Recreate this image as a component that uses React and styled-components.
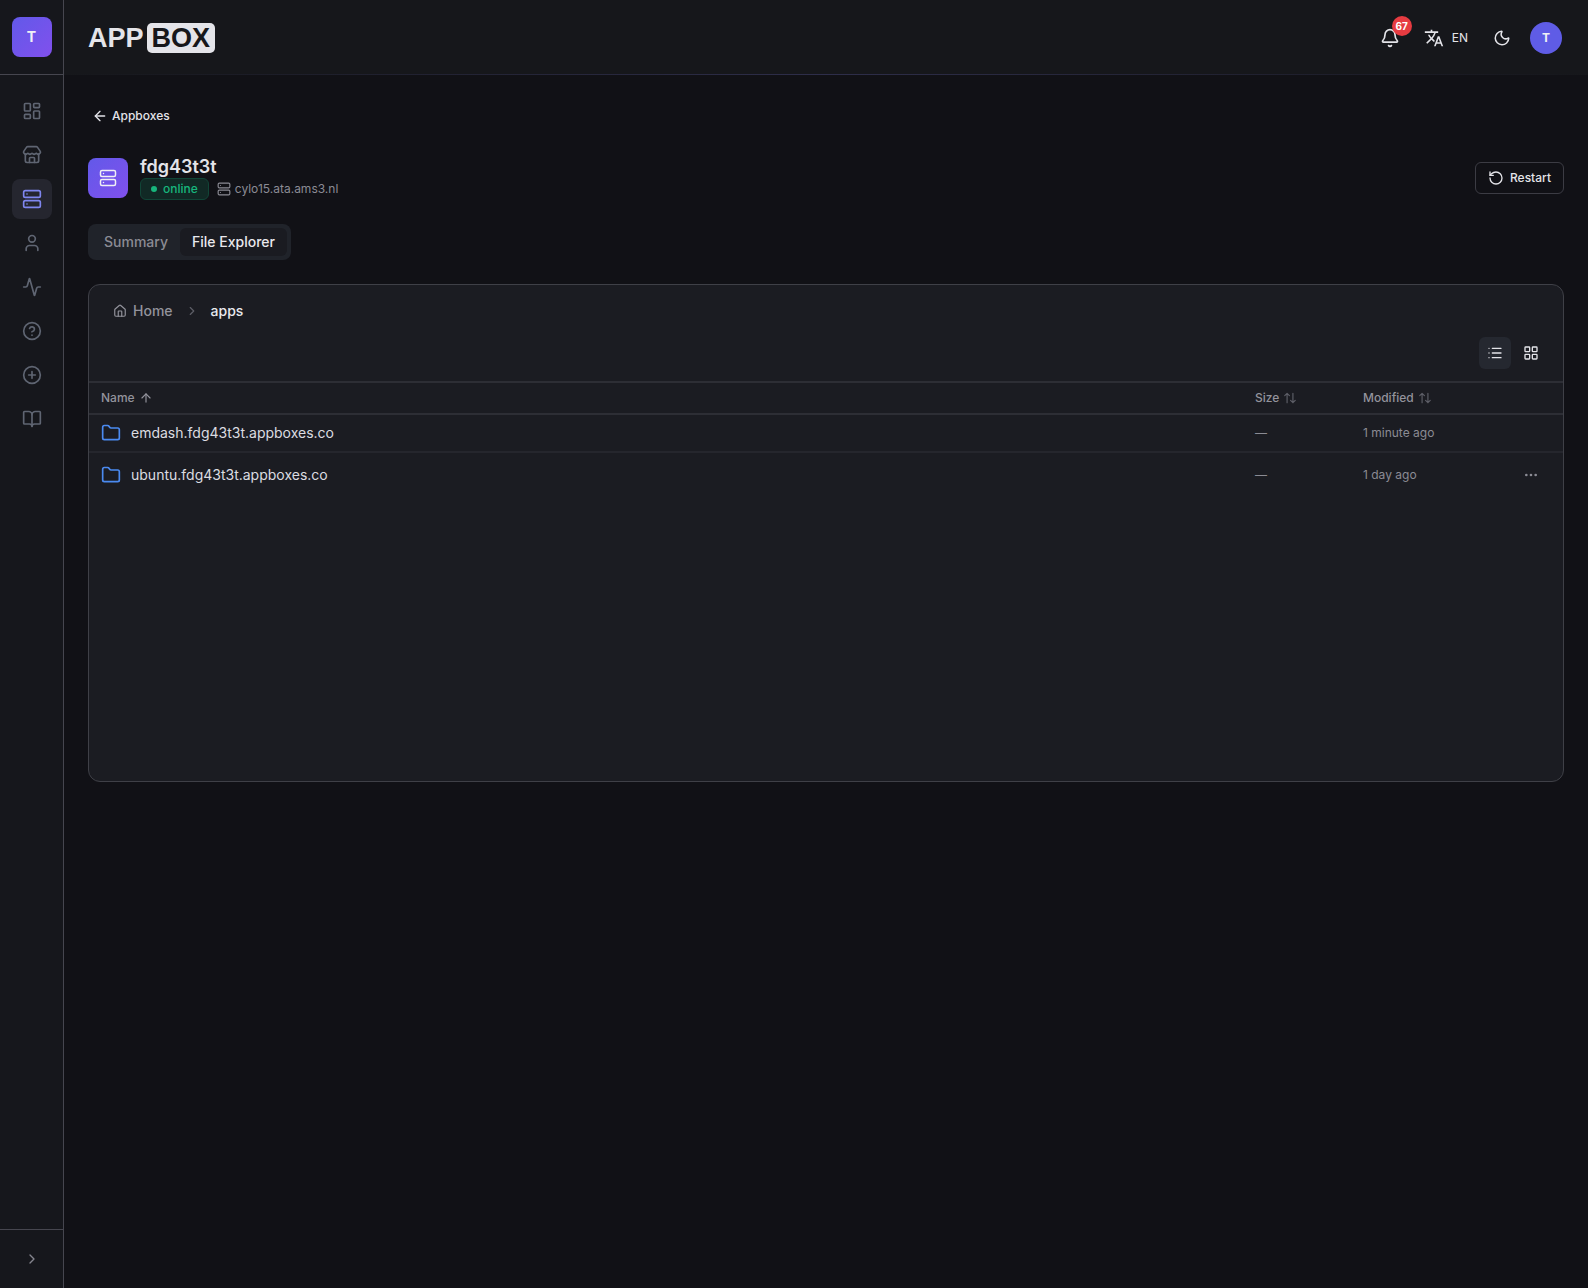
import React, { useState } from 'react'
import styled, { createGlobalStyle } from 'styled-components'
import {
  Activity,
  ArrowLeft,
  ArrowUp,
  Bell,
  BookOpen,
  ChevronRight,
  CircleHelp,
  CirclePlus,
  Ellipsis,
  Folder,
  House,
  LayoutDashboard,
  LayoutGrid,
  List,
  Moon,
  RotateCcw,
  Server,
  Store,
  User
} from 'lucide-react'
import { MdTranslate } from 'react-icons/md'

const GlobalStyle = createGlobalStyle`
  * {
    box-sizing: border-box;
  }

  body {
    margin: 0;
    background: #111116;
    color: #e4e4e9;
    font-family: Inter, 'Liberation Sans', sans-serif;
    font-size: 14px;
    line-height: 20px;
  }

  button {
    margin: 0;
    padding: 0;
    border: 0;
    background: none;
    color: inherit;
    font: inherit;
    cursor: pointer;
  }

  a {
    color: inherit;
    text-decoration: none;
  }

  svg {
    display: block;
    flex-shrink: 0;
  }
`

const Layout = styled.div`
  display: grid;
  grid-template-columns: 64px minmax(0, 1fr);
  min-height: 100vh;
`

const Sidebar = styled.aside`
  display: flex;
  flex-direction: column;
  background: #16171c;
  border-right: 1px solid #46464f;
`

const SidebarTop = styled.div`
  display: flex;
  align-items: center;
  justify-content: center;
  height: 75px;
  border-bottom: 1px solid #46464f;
`

const Tile = styled.div`
  display: flex;
  flex-shrink: 0;
  align-items: center;
  justify-content: center;
  width: 40px;
  height: 40px;
  border-radius: 8px;
  background: linear-gradient(135deg, #6259e9, #8150ed);
  color: #f0f0f5;
  font-weight: 700;
`

const Nav = styled.nav`
  display: flex;
  flex: 1;
  flex-direction: column;
  align-items: center;
  gap: 4px;
  padding: 16px 0;
`

const NavLink = styled.a`
  display: flex;
  align-items: center;
  justify-content: center;
  width: 40px;
  height: 40px;
  border-radius: 8px;
  background: ${({ $active }) => ($active ? '#25262f' : 'transparent')};
  color: ${({ $active }) => ($active ? '#7f86ee' : '#5f6572')};
`

const ExpandButton = styled.button`
  display: flex;
  align-items: center;
  justify-content: center;
  height: 59px;
  border-top: 1px solid #46464f;
  color: #85858e;
`

const Page = styled.div`
  display: flex;
  flex-direction: column;
`

const Header = styled.header`
  display: flex;
  align-items: center;
  justify-content: space-between;
  height: 75px;
  padding: 0 26px 0 24px;
  background:
    linear-gradient(90deg, #16171b, #2e2e4a, #16171b) bottom / 100% 1px no-repeat,
    #16171b;
`

const Logo = styled.a`
  display: flex;
  align-items: center;
  gap: 3px;
  color: #e4e4e9;
  font-family: 'Liberation Sans', Arial, sans-serif;
  font-size: 27px;
  font-weight: 700;
  line-height: 30px;
`

const LogoBox = styled.span`
  padding: 0 5px;
  border-radius: 5px;
  background: #e4e4e9;
  color: #16171b;
`

const HeaderActions = styled.div`
  display: flex;
  align-items: center;
  gap: 4px;
`

const HeaderButton = styled.button`
  position: relative;
  display: flex;
  align-items: center;
  justify-content: center;
  gap: 8px;
  min-width: 40px;
  height: 40px;
  padding: 0 10px;
  font-size: 12px;
`

const Count = styled.span`
  position: absolute;
  top: -2px;
  right: -2px;
  width: 20px;
  height: 20px;
  border-radius: 50%;
  background: #e63b41;
  color: #fff;
  font-size: 10px;
  font-weight: 700;
  line-height: 20px;
`

const Avatar = styled.button`
  width: 32px;
  height: 32px;
  margin-left: 4px;
  border-radius: 50%;
  background: #5f5ce6;
  color: #f0f0f5;
  font-size: 12px;
  font-weight: 700;
`

const Main = styled.main`
  padding: 25px 24px;
`

const BackLink = styled.a`
  display: inline-flex;
  align-items: center;
  gap: 4px;
  height: 32px;
  padding: 0 4px;
  font-size: 12px;
  font-weight: 500;
`

const TitleBar = styled.div`
  display: flex;
  align-items: center;
  gap: 12px;
  margin-top: 24px;
`

const TitleText = styled.div`
  flex: 1;
`

const Title = styled.h1`
  margin: 0;
  font-size: 18px;
  font-weight: 600;
  line-height: 22px;
`

const Meta = styled.div`
  display: flex;
  align-items: center;
  gap: 8px;
  color: #8b8b94;
  font-size: 12px;
`

const Status = styled.span`
  display: flex;
  align-items: center;
  gap: 6px;
  height: 22px;
  padding: 0 10px;
  border: 1px solid #114537;
  border-radius: 6px;
  background: #112925;
  color: #17b67c;
  font-weight: 500;
`

const Dot = styled.span`
  width: 6px;
  height: 6px;
  border-radius: 50%;
  background: #17b67c;
`

const Host = styled.span`
  display: flex;
  align-items: center;
  gap: 4px;
`

const RestartButton = styled.button`
  display: flex;
  align-items: center;
  gap: 6px;
  height: 32px;
  padding: 0 12px;
  border: 1px solid #3c3c44;
  border-radius: 6px;
  font-size: 12px;
  font-weight: 500;
`

const Tabs = styled.div`
  display: inline-flex;
  margin-top: 24px;
  padding: 4px;
  border-radius: 8px;
  background: #20232a;
`

const Tab = styled.button`
  height: 28px;
  padding: 0 12px;
  border-radius: 6px;
  background: ${({ $active }) => ($active ? '#1a1b21' : 'transparent')};
  color: ${({ $active }) => ($active ? '#e9e9ee' : '#8b8b94')};
  font-weight: 500;
`

const Card = styled.section`
  margin-top: 24px;
  border: 1px solid #3f4047;
  border-radius: 12px;
  background: #1b1c22;
`

const Breadcrumbs = styled.nav`
  display: flex;
  align-items: center;
  gap: 12px;
  padding: 16px 24px 0;
  color: #93939c;
  font-weight: 500;
`

const Crumb = styled.a`
  display: flex;
  align-items: center;
  gap: 6px;
  color: ${({ $current }) => ($current ? '#e9e9ee' : 'inherit')};
`

const Toolbar = styled.div`
  display: flex;
  justify-content: flex-end;
  gap: 4px;
  padding: 16px 16px 12px;
  border-bottom: 2px solid #2d2e35;
`

const ViewButton = styled.button`
  display: flex;
  align-items: center;
  justify-content: center;
  width: 32px;
  height: 32px;
  border-radius: 6px;
  background: ${({ $active }) => ($active ? '#252830' : 'transparent')};
`

const TableArea = styled.div`
  min-height: 398px;
`

const Table = styled.table`
  width: 100%;
  border-spacing: 0;
  table-layout: fixed;
`

const Th = styled.th`
  width: ${({ $width }) => $width || 'auto'};
  height: 32px;
  padding: 0 12px;
  border-bottom: 2px solid #2d2e35;
  color: #93939c;
  font-size: 12px;
  text-align: left;
`

const SortButton = styled.button`
  display: flex;
  align-items: center;
  gap: 4px;
  font-weight: 500;
`

const Td = styled.td`
  height: 38px;
  padding: 0 12px;
  border-bottom: 2px solid #25262d;
  color: #8b8b94;
  font-size: 12px;

  tr:last-child > & {
    height: 44px;
    border-bottom: 0;
  }
`

const FileLink = styled.a`
  display: flex;
  align-items: center;
  gap: 10px;
  color: #dcdce1;
  font-size: 14px;
`

const MenuButton = styled.button`
  display: flex;
  align-items: center;
  justify-content: center;
  width: 32px;
  height: 32px;
  margin: 0 4px 0 auto;
`

const navItems = [
  { label: 'Dashboard', icon: LayoutDashboard },
  { label: 'App Store', icon: Store },
  { label: 'Appboxes', icon: Server },
  { label: 'Account', icon: User },
  { label: 'Activity', icon: Activity },
  { label: 'Help', icon: CircleHelp },
  { label: 'New Appbox', icon: CirclePlus },
  { label: 'Docs', icon: BookOpen }
]

const files = [
  { name: 'emdash.fdg43t3t.appboxes.co', modified: '1 minute ago', hasMenu: false },
  { name: 'ubuntu.fdg43t3t.appboxes.co', modified: '1 day ago', hasMenu: true }
]

const SortIcon = () => (
  <svg width="14" height="14" viewBox="0 0 24 24" fill="none" stroke="#5d5e67" strokeWidth="2" strokeLinecap="round" strokeLinejoin="round">
    <path d="M3 8l4-4 4 4M7 4v16M21 16l-4 4-4-4M17 4v16" />
  </svg>
)

const FileTable = () => (
  <Table>
    <thead>
      <tr>
        <Th>
          <SortButton>
            Name <ArrowUp size={14} />
          </SortButton>
        </Th>
        <Th $width="108px">
          <SortButton>
            Size <SortIcon />
          </SortButton>
        </Th>
        <Th $width="144px">
          <SortButton>
            Modified <SortIcon />
          </SortButton>
        </Th>
        <Th as="td" $width="68px" />
      </tr>
    </thead>
    <tbody>
      {files.map((file) => (
        <tr key={file.name}>
          <Td>
            <FileLink href="#">
              <Folder size={20} color="#4b8af0" />
              {file.name}
            </FileLink>
          </Td>
          <Td>—</Td>
          <Td>{file.modified}</Td>
          <Td>
            {file.hasMenu && (
              <MenuButton aria-label={`Actions for ${file.name}`}>
                <Ellipsis size={16} />
              </MenuButton>
            )}
          </Td>
        </tr>
      ))}
    </tbody>
  </Table>
)

const App = () => {
  const [tab, setTab] = useState('File Explorer')
  const [view, setView] = useState('list')

  return (
    <Layout>
      <GlobalStyle />
      <Sidebar>
        <SidebarTop>
          <Tile>T</Tile>
        </SidebarTop>
        <Nav aria-label="Main">
          {navItems.map(({ label, icon: Icon }) => (
            <NavLink key={label} href="#" aria-label={label} $active={label === 'Appboxes'}>
              <Icon size={20} />
            </NavLink>
          ))}
        </Nav>
        <ExpandButton aria-label="Expand sidebar">
          <ChevronRight size={16} />
        </ExpandButton>
      </Sidebar>

      <Page>
        <Header>
          <Logo href="#">
            APP<LogoBox>BOX</LogoBox>
          </Logo>
          <HeaderActions>
            <HeaderButton aria-label="Notifications">
              <Bell size={20} />
              <Count>67</Count>
            </HeaderButton>
            <HeaderButton aria-label="Language">
              <MdTranslate size={20} />
              EN
            </HeaderButton>
            <HeaderButton aria-label="Toggle theme">
              <Moon size={18} />
            </HeaderButton>
            <Avatar>T</Avatar>
          </HeaderActions>
        </Header>

        <Main>
          <BackLink href="#">
            <ArrowLeft size={16} />
            Appboxes
          </BackLink>

          <TitleBar>
            <Tile>
              <Server size={18} />
            </Tile>
            <TitleText>
              <Title>fdg43t3t</Title>
              <Meta>
                <Status>
                  <Dot />
                  online
                </Status>
                <Host>
                  <Server size={14} />
                  cylo15.ata.ams3.nl
                </Host>
              </Meta>
            </TitleText>
            <RestartButton>
              <RotateCcw size={16} />
              Restart
            </RestartButton>
          </TitleBar>

          <Tabs role="tablist">
            {['Summary', 'File Explorer'].map((name) => (
              <Tab key={name} role="tab" aria-selected={tab === name} $active={tab === name} onClick={() => setTab(name)}>
                {name}
              </Tab>
            ))}
          </Tabs>

          <Card>
            <Breadcrumbs aria-label="Breadcrumb">
              <Crumb href="#">
                <House size={14} />
                Home
              </Crumb>
              <ChevronRight size={14} color="#5d5e67" />
              <Crumb href="#" $current>
                apps
              </Crumb>
            </Breadcrumbs>
            <Toolbar>
              <ViewButton aria-label="List view" $active={view === 'list'} onClick={() => setView('list')}>
                <List size={16} />
              </ViewButton>
              <ViewButton aria-label="Grid view" $active={view === 'grid'} onClick={() => setView('grid')}>
                <LayoutGrid size={16} />
              </ViewButton>
            </Toolbar>
            <TableArea>
              <FileTable />
            </TableArea>
          </Card>
        </Main>
      </Page>
    </Layout>
  )
}

export default App
